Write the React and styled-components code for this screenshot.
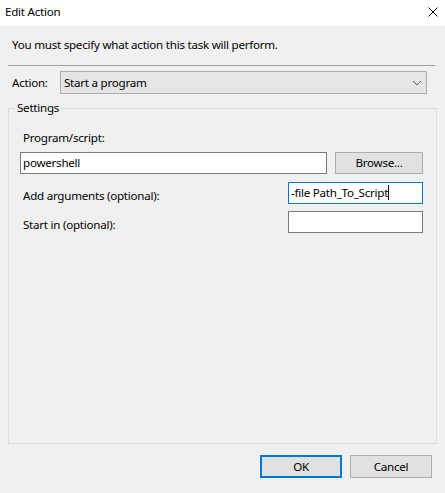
import React from 'react';
import styled, { createGlobalStyle } from 'styled-components';

const GlobalStyle = createGlobalStyle`
  html, body {
    margin: 0;
    padding: 0;
    background: #f0f0f0;
  }
  body {
    font-family: "Noto Sans", "Open Sans", sans-serif;
    font-size: 11.6px;
    letter-spacing: -0.25px;
    color: #000000;
  }
`;

const Window = styled.div`
  width: 445px;
  height: 493px;
  background: #f0f0f0;
  overflow: hidden;
`;

const TitleBar = styled.div`
  height: 26px;
  background: #ffffff;
  display: flex;
  align-items: flex-start;
  justify-content: space-between;
  padding: 4px 7px 0 5px;
  box-sizing: border-box;
`;

const Title = styled.div`
  line-height: 16px;
`;

const CloseIcon = styled.svg`
  margin-top: 3px;
`;

const Body = styled.div`
  padding: 11px 0 0 0;
`;

const Instruction = styled.div`
  line-height: 16px;
  padding-left: 12px;
`;

const Separator = styled.div`
  margin: 12px 10px 0 8px;
  height: 1px;
  background: #a0a0a0;
`;

const ActionRow = styled.div`
  display: flex;
  align-items: center;
  margin-top: 5px;
  padding: 0 18px 0 12px;
`;

const ActionLabel = styled.span`
  width: 48px;
  line-height: 16px;
`;

const Select = styled.div`
  flex: 1;
  height: 23px;
  box-sizing: border-box;
  background: #e5e5e5;
  border: 1px solid #acacac;
  display: flex;
  align-items: center;
  justify-content: space-between;
  padding: 0 4px 0 3px;
`;

const Group = styled.fieldset`
  margin: 6px 8px 0 8px;
  padding: 0;
  border: 1px solid #dcdcdc;
  min-width: 0;
`;

const Legend = styled.legend`
  margin-left: 6px;
  padding: 0 2px;
  line-height: 16px;
`;

const GroupInner = styled.div`
  height: 327px;
  box-sizing: border-box;
  padding: 14px 13px 0 11px;
  display: flex;
  flex-direction: column;
`;

const FieldLabel = styled.div`
  line-height: 16px;
  margin-left: 3px;
  padding-top: ${p => p.$shift || 0}px;
`;

const FieldRow = styled.div`
  display: flex;
  align-items: center;
  justify-content: space-between;
  margin-top: ${p => p.$gap}px;
`;

const TextBox = styled.div`
  width: ${p => p.$width}px;
  height: 22px;
  box-sizing: border-box;
  background: #ffffff;
  border: 1px solid ${p => (p.$focused ? '#0078d7' : '#7a7a7a')};
  display: flex;
  align-items: center;
  padding: 0 2px 1px 2px;
  white-space: nowrap;
`;

const Caret = styled.span`
  display: inline-block;
  width: 1px;
  height: 15px;
  background: #000000;
`;

const Button = styled.div`
  width: ${p => p.$width || 82}px;
  height: ${p => p.$height || 23}px;
  box-sizing: border-box;
  background: #e1e1e1;
  border: ${p => (p.$default ? '2px solid #0078d7' : '1px solid #adadad')};
  display: flex;
  align-items: center;
  justify-content: center;
  padding-bottom: 1px;
`;

const Footer = styled.div`
  display: flex;
  justify-content: flex-end;
  gap: 8px;
  margin-top: 11px;
  padding-right: 13px;
`;

function Chevron() {
  return (
    <svg width="10" height="6" viewBox="0 0 10 6">
      <path d="M1 1 L5 5 L9 1" fill="none" stroke="#606060" strokeWidth="1" />
    </svg>
  );
}

export default function App() {
  return (
    <Window>
      <GlobalStyle />
      <TitleBar>
        <Title>Edit Action</Title>
        <CloseIcon width="10" height="10" viewBox="0 0 10 10">
          <path d="M0.5 0.5 L9.5 9.5 M9.5 0.5 L0.5 9.5" stroke="#000000" strokeWidth="1" />
        </CloseIcon>
      </TitleBar>
      <Body>
        <Instruction>You must specify what action this task will perform.</Instruction>
        <Separator />
        <ActionRow>
          <ActionLabel>Action:</ActionLabel>
          <Select>
            <span>Start a program</span>
            <Chevron />
          </Select>
        </ActionRow>
        <Group>
          <Legend>Settings</Legend>
          <GroupInner>
            <FieldLabel>Program/script:</FieldLabel>
            <FieldRow $gap={6}>
              <TextBox $width={307}>powershell</TextBox>
              <Button $width={88} $height={22}>Browse...</Button>
            </FieldRow>
            <FieldRow $gap={8}>
              <FieldLabel $shift={5}>Add arguments (optional):</FieldLabel>
              <TextBox $width={135} $focused>
                -file Path_To_Script
                <Caret />
              </TextBox>
            </FieldRow>
            <FieldRow $gap={7}>
              <FieldLabel $shift={5}>Start in (optional):</FieldLabel>
              <TextBox $width={135} />
            </FieldRow>
          </GroupInner>
        </Group>
        <Footer>
          <Button $default>OK</Button>
          <Button>Cancel</Button>
        </Footer>
      </Body>
    </Window>
  );
}
